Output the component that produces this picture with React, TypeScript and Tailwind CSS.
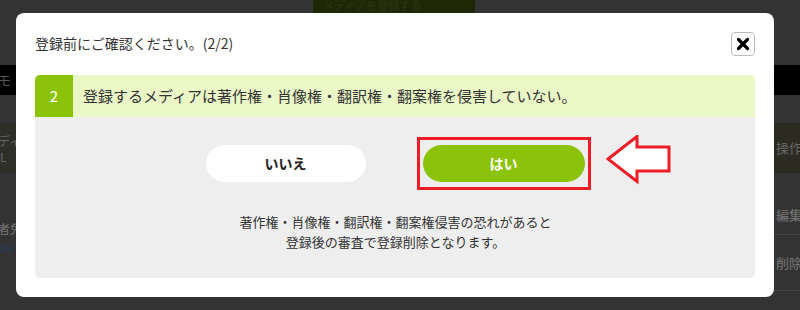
import React from "react";

const jp = { fontFamily: '"Noto Sans CJK JP", "Noto Sans", sans-serif' };

export default function App() {
  return (
    <div className="relative w-[800px] h-[310px] overflow-hidden bg-[#333333]" style={jp}>
      {/* background page (dimmed) */}
      <div className="flex flex-col w-full h-full">
        <div className="h-[13px] flex">
          <div className="ml-[313px] w-[162px] h-[13px] bg-[#1f2806] text-[11px] leading-[10px] text-[#2c3514] pl-[10px] overflow-hidden">メディアを登録する</div>
        </div>
        <div className="h-[52px]" />
        <div className="h-[30px] bg-black flex items-center justify-between text-[13px] text-[#555]">
          <span className="-ml-[2px]">モ</span>
          <span />
        </div>
        <div className="h-[28px]" />
        <div className="h-[50px] flex justify-between">
          <div className="w-[16px] bg-[#2f2f2a] flex flex-col text-[12px] leading-[16px] text-[#666] pt-[10px] overflow-hidden whitespace-nowrap">
            <span className="-ml-[2px]">ディ</span>
            <span>L</span>
          </div>
          <div className="w-[26px] bg-[#2b2b22] flex items-center text-[13px] text-[#666] pl-[2px] overflow-hidden whitespace-nowrap">
            <span>操作</span>
          </div>
        </div>
        <div className="flex-1 flex justify-between">
          <div className="w-[16px] flex flex-col text-[12px] leading-[18px] pt-[47px] overflow-hidden whitespace-nowrap">
            <span className="text-[#777] -ml-[2px]">者免</span>
            <span className="text-[#2a3a6a] -ml-[2px]">os:</span>
          </div>
          <div className="w-[26px] flex flex-col text-[13px] text-[#777] overflow-hidden whitespace-nowrap">
            <div className="h-[62px] border-b border-[#444] flex items-end pb-[10px] pl-[2px]">編集</div>
            <div className="h-[56px] border-b border-[#444] flex items-center pl-[2px]">削除</div>
          </div>
        </div>
      </div>

      {/* modal */}
      <div className="absolute left-[16px] top-[13px] w-[758px] h-[284px] bg-white rounded-[8px] px-[19px] pt-[19px]">
        <div className="flex items-center justify-between h-[24px]">
          <span className="text-[14px] text-[#333] leading-none -mt-[3px]">登録前にご確認ください。(2/2)</span>
          <button className="w-[24px] h-[24px] border border-[#bbb] rounded-[4px] flex items-center justify-center bg-white">
            <svg width="14" height="14" viewBox="0 0 14 14">
              <path d="M2.5 2.5 L11.5 11.5 M11.5 2.5 L2.5 11.5" stroke="#000" strokeWidth="3.2" strokeLinecap="round" />
            </svg>
          </button>
        </div>
        <div className="mt-[19px] rounded-[5px] overflow-hidden">
          <div className="flex h-[42px] bg-[#eaf7c6]">
            <div className="w-[38px] bg-[#8bc20a] text-white text-[15px] flex items-center justify-center">2</div>
            <div className="pl-[10px] flex items-center text-[15px] text-[#333]">
              登録するメディアは著作権・肖像権・翻訳権・翻案権を侵害していない。
            </div>
          </div>
          <div className="h-[161px] bg-[#eeeeee] flex flex-col items-center">
            <div className="flex items-center mt-[20px] gap-[51px] ml-[6px]">
              <button className="w-[160px] h-[37px] rounded-full bg-white text-[14px] font-bold text-[#222]">いいえ</button>
              <div className="relative">
                <div className="border-[3px] border-[#ee1c25] px-[3px] py-[5px]">
                  <button className="w-[162px] h-[37px] rounded-full bg-[#8bc20a] text-[14px] font-bold text-white block">はい</button>
                </div>
                <svg className="absolute left-[189px] top-[-2px]" width="66" height="50" viewBox="0 0 66 50">
                  <path d="M2 24 L31 1.5 L31 12 L63 12 L63 36 L31 36 L31 46.5 Z" fill="#fff" stroke="#ee1c25" strokeWidth="3" strokeLinejoin="miter" />
                </svg>
              </div>
            </div>
            <div className="mt-[22px] text-center text-[13px] leading-[20px] text-[#333] ml-[1px]">
              <div>著作権・肖像権・翻訳権・翻案権侵害の恐れがあると</div>
              <div>登録後の審査で登録削除となります。</div>
            </div>
          </div>
        </div>
      </div>
    </div>
  );
}
